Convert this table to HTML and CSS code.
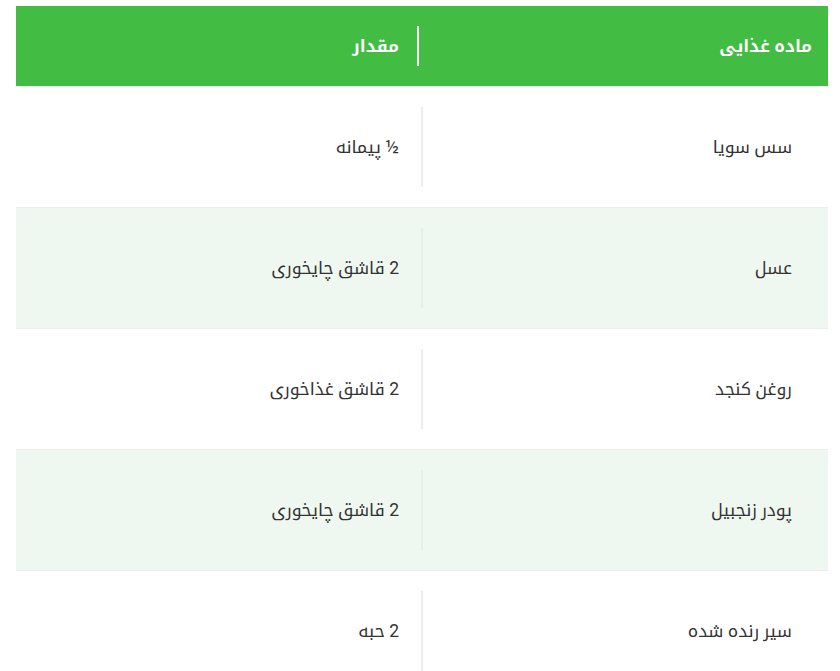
FILE: index.html
```html
<!DOCTYPE html>
<html lang="fa" dir="rtl">
<head>
<meta charset="utf-8">
<title>مواد لازم</title>
<link rel="stylesheet" href="styles.css">
</head>
<body>
<div class="page">
  <div class="table">
    <div class="row head">
      <div class="cell name"><span class="txt">ماده غذایی</span></div>
      <div class="cell amount"><div class="inner"><span class="txt">مقدار</span></div></div>
    </div>
    <div class="row">
      <div class="cell name"><span class="txt">سس سویا</span></div>
      <div class="cell amount"><div class="inner"><span class="txt">½ پیمانه</span></div></div>
    </div>
    <div class="row alt">
      <div class="cell name"><span class="txt">عسل</span></div>
      <div class="cell amount"><div class="inner"><span class="txt">2 قاشق چایخوری</span></div></div>
    </div>
    <div class="row">
      <div class="cell name"><span class="txt">روغن کنجد</span></div>
      <div class="cell amount"><div class="inner"><span class="txt">2 قاشق غذاخوری</span></div></div>
    </div>
    <div class="row alt">
      <div class="cell name"><span class="txt">پودر زنجبیل</span></div>
      <div class="cell amount"><div class="inner"><span class="txt">2 قاشق چایخوری</span></div></div>
    </div>
    <div class="row">
      <div class="cell name"><span class="txt">سیر رنده شده</span></div>
      <div class="cell amount"><div class="inner"><span class="txt">2 حبه</span></div></div>
    </div>
  </div>
</div>
</body>
</html>
```

FILE: styles.css
```css
html, body {
  margin: 0;
  padding: 0;
  background: #ffffff;
}

body {
  font-family: Roboto, "Noto Kufi Arabic", "Noto Sans Arabic UI", "DejaVu Sans", sans-serif;
  color: #333333;
  font-size: 17.5px;
}

.page {
  padding: 6px 12px 0 16px;
}

.table {
  width: 812px;
  display: flex;
  flex-direction: column;
}

.row {
  display: flex;
  flex-direction: row;
  height: 120px;
  border-top: 1px solid #ededed;
  background: #ffffff;
}

.row.alt {
  background: #eff8f0;
}

.row.head {
  height: 80px;
  border-top: none;
  background: #42bc43;
  color: #ffffff;
  font-weight: bold;
  font-size: 17px;
}

.cell {
  display: flex;
  align-items: center;
}

.cell.name {
  width: 405px;
  padding-right: 36px;
  box-sizing: border-box;
}

.head .cell.name {
  padding-right: 16px;
}

.cell.amount {
  width: 407px;
  box-sizing: border-box;
}

.inner {
  height: 80px;
  flex: 1;
  display: flex;
  align-items: center;
  border-right: 2px solid #ececec;
  padding-right: 22px;
}

.head .inner {
  height: 40px;
  border-right: 2px solid #ffffff;
  margin-right: 4px;
  padding-right: 18px;
}
```
